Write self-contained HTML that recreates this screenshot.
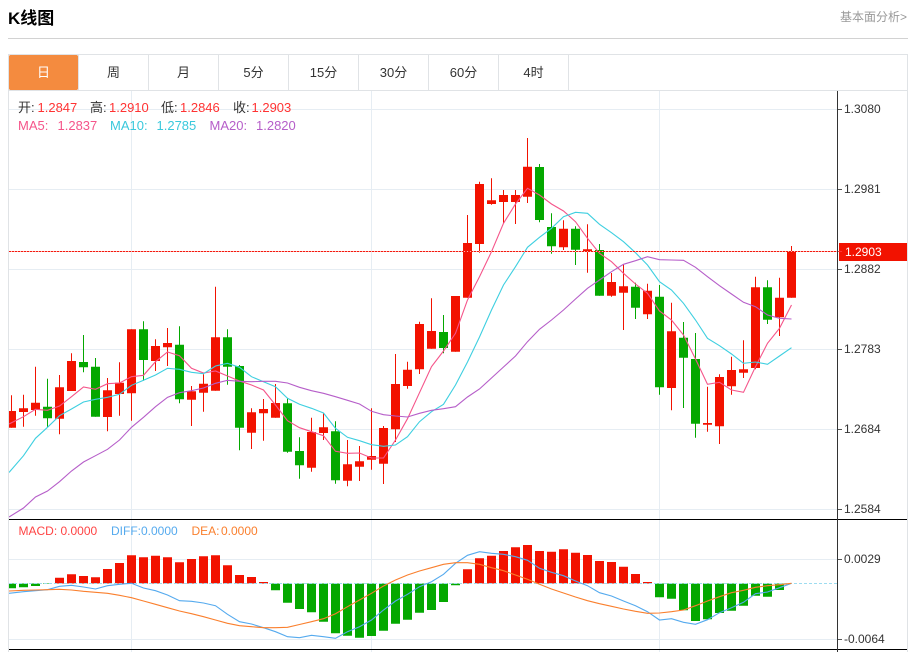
<!DOCTYPE html>
<html lang="zh"><head><meta charset="utf-8"><title>K线图</title>
<style>
html,body{margin:0;padding:0;background:#fff}
body{width:917px;height:652px;position:relative;overflow:hidden;font-family:"Liberation Sans","Noto Sans CJK SC",sans-serif}
svg{position:absolute;left:0;top:0}
.t{position:absolute;white-space:nowrap}
.tab{position:absolute;top:55px;height:35px;width:69px;line-height:35px;text-align:center;font-size:13px;color:#333}
</style></head><body>
<div class="t" style="left:8px;top:8px;font-size:17px;line-height:22px;font-weight:bold;color:#000">K线图</div>
<div class="t" style="right:10px;top:9px;font-size:12px;line-height:16px;color:#999">基本面分析&gt;</div>
<svg width="917" height="652" viewBox="0 0 917 652" fill="none">
<defs><clipPath id="c"><rect x="9" y="91" width="828" height="561"/></clipPath></defs>
<path d="M8 38.5H908" stroke="#d2d2d2"/>
<path d="M8 54.5H908M8 90.5H908M8.5 54V652M907.5 54V652" stroke="#e0e3e6"/>
<path d="M78.5 55V90M148.5 55V90M218.5 55V90M288.5 55V90M358.5 55V90M428.5 55V90M498.5 55V90M568.5 55V90" stroke="#e0e3e6"/>
<rect x="9" y="55" width="69" height="35" rx="2" fill="#f48b3f"/>
<path d="M9 109.5H837M9 189.5H837M9 269.5H837M9 349.5H837M9 429.5H837M9 509.5H837M9 559.5H837M9 639.5H837M131.5 91V652M371.5 91V652M659.5 91V652" stroke="#e6edf3"/>
<g clip-path="url(#c)">
<path stroke="#f21200" d="M11.5 395.3V427.7M23.5 394.7V426.7M35.5 366.7V415.7M59.5 375V434.3M71.5 353.3V391M107.5 378V431.3M119.5 362.3V415.7M131.5 329.3V420.7M155.5 339.3V371M167.5 328V366M191.5 386V426M203.5 374.3V411.7M215.5 286.7V390.7M251.5 408.3V449M263.5 399V440.7M275.5 384V417.7M311.5 417.7V471.7M323.5 413.3V440M347.5 440V486.3M359.5 446V481M371.5 408.3V469.7M383.5 426V484M395.5 354V442M407.5 361.7V388.7M419.5 321.7V374M431.5 298.3V348.7M455.5 296V351.7M467.5 215V297.7M479.5 181.7V252.7M491.5 178.3V204.7M503.5 190V223.3M515.5 190V224M527.5 138V203M563.5 220.3V250M587.5 224.3V272.7M611.5 273V296.7M623.5 264V330M647.5 283.7V319M671.5 302.7V410.3M707.5 386.7V431.7M719.5 374.3V444M731.5 356.7V394.7M743.5 340.3V378M755.5 276.7V369.3M779.5 277.7V336M791.5 246V297.7"/>
<path stroke="#04a800" d="M47.5 378.7V427.3M83.5 335V372.3M95.5 358V416.7M143.5 321.3V380.7M179.5 326.3V403.3M227.5 329.3V384.7M239.5 365V450.3M287.5 398.3V452.7M299.5 437.3V478.7M335.5 421.3V483.7M443.5 315V353.3M539.5 164V222.3M551.5 213.3V253.7M575.5 226.3V265M599.5 244V295.7M635.5 282.7V319M659.5 285V394.7M683.5 322V408M695.5 333V437.7M767.5 280.3V324"/>
<path fill="#f21200" d="M7 411h9V427.7h-9zM19 408.3h9V412h-9zM31 402.7h9V410h-9zM55 387.3h9V418.7h-9zM67 361h9V391h-9zM103 390.3h9V417h-9zM115 382.7h9V394h-9zM127 329.3h9V393.3h-9zM151 346h9V361h-9zM163 343h9V347.3h-9zM187 391.3h9V399.7h-9zM199 383.7h9V392.7h-9zM211 337.3h9V390.7h-9zM247 412.3h9V432.7h-9zM259 409h9V413.3h-9zM271 403h9V417.7h-9zM307 432h9V467.7h-9zM319 427.3h9V433h-9zM343 464.3h9V480.7h-9zM355 461.3h9V466.7h-9zM367 456h9V459.7h-9zM379 428h9V463.7h-9zM391 384h9V429.3h-9zM403 369.7h9V386h-9zM415 324h9V369.3h-9zM427 331h9V348.7h-9zM451 296h9V351.7h-9zM463 243h9V297.7h-9zM475 184h9V244h-9zM487 200.3h9V204h-9zM499 195h9V202h-9zM511 195h9V202h-9zM523 166.7h9V196.7h-9zM559 228.7h9V247.3h-9zM583 249.3h9V251.7h-9zM607 282h9V295.7h-9zM619 286.3h9V292.7h-9zM643 290.7h9V314.3h-9zM667 331.3h9V388h-9zM703 423h9V424.7h-9zM715 377h9V426.3h-9zM727 370h9V386.3h-9zM739 369.3h9V372.7h-9zM751 287.3h9V368h-9zM775 297.7h9V317.3h-9zM787 251.7h9V297.7h-9z"/>
<path fill="#04a800" d="M43 406.7h9V418.3h-9zM79 362h9V367.3h-9zM91 366.7h9V416.7h-9zM139 329.3h9V360h-9zM175 344.7h9V399.3h-9zM223 337.3h9V366.7h-9zM235 366h9V427.7h-9zM283 403.3h9V451.7h-9zM295 451h9V465.3h-9zM331 431.3h9V480.3h-9zM439 332h9V348h-9zM535 167h9V220h-9zM547 227h9V246.3h-9zM571 228.7h9V249.7h-9zM595 250h9V295.7h-9zM631 286.7h9V307.7h-9zM655 296.7h9V387.3h-9zM679 337.7h9V357.7h-9zM691 359h9V423.7h-9zM763 287.3h9V319.7h-9z"/>
<polyline stroke="#f5558a" stroke-width="1.1" points="9,424 23.5,416.7 35.5,409.3 47.5,410.3 59.5,406 71.5,396.7 83.5,387 95.5,389.3 107.5,383.7 119.5,383 131.5,376.7 143.5,375.3 155.5,361.7 167.5,352 179.5,355.7 191.5,368.3 203.5,373 215.5,371 227.5,376 239.5,381 251.5,385 263.5,390 275.5,405 287.5,420.7 299.5,427.7 311.5,431.7 323.5,435.7 335.5,451.3 347.5,453.3 359.5,453 371.5,458 383.5,458 395.5,440 407.5,418.7 419.5,392.7 431.5,366.7 443.5,351 455.5,333.3 467.5,300 479.5,276.7 491.5,251.7 503.5,223.3 515.5,204 527.5,188.3 539.5,195 551.5,204 563.5,211 575.5,221.7 587.5,238.3 599.5,253.3 611.5,261.7 623.5,273.3 635.5,284 647.5,293.3 659.5,311 671.5,320 683.5,335 695.5,359 707.5,384.3 719.5,382.3 731.5,390 743.5,392.3 755.5,366.7 767.5,343.3 779.5,328.3 791.5,305"/>
<polyline stroke="#3ecfe0" stroke-width="1.1" points="9,472.5 23.5,455.7 35.5,438.3 47.5,427.3 59.5,415.7 71.5,409 83.5,402 95.5,399.3 107.5,397.3 119.5,394.3 131.5,385.3 143.5,380.3 155.5,375 167.5,368.3 179.5,369.3 191.5,372.3 203.5,373.7 215.5,366 227.5,363.3 239.5,367.3 251.5,376.7 263.5,381.7 275.5,386.7 287.5,398.3 299.5,404.3 311.5,408.3 323.5,413 335.5,428.3 347.5,437.3 359.5,440.7 371.5,444.7 383.5,446.3 395.5,445 407.5,436.7 419.5,421.7 431.5,411.7 443.5,404.3 455.5,385 467.5,362 479.5,337 491.5,310 503.5,285 515.5,266.7 527.5,247.3 539.5,237.3 551.5,228.3 563.5,216.7 575.5,212.3 587.5,213.3 599.5,224.3 611.5,232.7 623.5,241.7 635.5,252.7 647.5,265 659.5,281.7 671.5,290 683.5,303.3 695.5,320 707.5,338.3 719.5,345.7 731.5,354 743.5,363.3 755.5,362 767.5,364.3 779.5,356 791.5,347.7"/>
<polyline stroke="#b65ec9" stroke-width="1.1" points="9,517 23.5,508 35.5,497 47.5,491 59.5,481.7 71.5,471 83.5,462 95.5,455.7 107.5,449.3 119.5,440 131.5,427.3 143.5,417.3 155.5,406.7 167.5,397.3 179.5,392.7 191.5,390.7 203.5,388 215.5,383.3 227.5,380.3 239.5,381.3 251.5,381.7 263.5,381.3 275.5,381.3 287.5,383 299.5,387.3 311.5,390.7 323.5,393.3 335.5,396.7 347.5,400.3 359.5,404 371.5,411.3 383.5,414.7 395.5,416 407.5,417 419.5,413.3 431.5,410.3 443.5,408.7 455.5,406.7 467.5,397 479.5,389 491.5,378 503.5,367 515.5,356 527.5,341.7 539.5,329.3 551.5,320 563.5,310 575.5,299 587.5,288.3 599.5,280 611.5,271.7 623.5,264.3 635.5,260.7 647.5,256.7 659.5,259.7 671.5,260 683.5,260.3 695.5,267.3 707.5,276.7 719.5,285.7 731.5,294 743.5,302.3 755.5,306.7 767.5,315 779.5,318.3 791.5,319"/>
<path stroke="#ffb0a8" d="M9 251.5H837"/>
<path stroke="#f31a10" stroke-dasharray="2 1" d="M9 251.5H837"/>
<path fill="#f21200" d="M55 577.7h9V583.5h-9zM67 574.3h9V583.5h-9zM79 576h9V583.5h-9zM91 577.3h9V583.5h-9zM103 569h9V583.5h-9zM115 563h9V583.5h-9zM127 555.3h9V583.5h-9zM139 557.3h9V583.5h-9zM151 555.7h9V583.5h-9zM163 557.3h9V583.5h-9zM175 562.3h9V583.5h-9zM187 559h9V583.5h-9zM199 556.3h9V583.5h-9zM211 555.3h9V583.5h-9zM223 565.3h9V583.5h-9zM235 575h9V583.5h-9zM247 577h9V583.5h-9zM259 582h9V583.5h-9zM463 569.3h9V583.5h-9zM475 558.3h9V583.5h-9zM487 555.7h9V583.5h-9zM499 551h9V583.5h-9zM511 547.3h9V583.5h-9zM523 545h9V583.5h-9zM535 551h9V583.5h-9zM547 551.7h9V583.5h-9zM559 549.3h9V583.5h-9zM571 552.7h9V583.5h-9zM583 555h9V583.5h-9zM595 561h9V583.5h-9zM607 562h9V583.5h-9zM619 566.7h9V583.5h-9zM631 574h9V583.5h-9zM643 582h9V583.5h-9z"/>
<path fill="#04a800" d="M7 583.5h9V588.3h-9zM19 583.5h9V587.3h-9zM31 583.5h9V586h-9zM43 583.5h9V584h-9zM271 583.5h9V590.3h-9zM283 583.5h9V602.7h-9zM295 583.5h9V609h-9zM307 583.5h9V612.3h-9zM319 583.5h9V621.7h-9zM331 583.5h9V633.3h-9zM343 583.5h9V635.7h-9zM355 583.5h9V637.7h-9zM367 583.5h9V636h-9zM379 583.5h9V630.7h-9zM391 583.5h9V623.7h-9zM403 583.5h9V619.7h-9zM415 583.5h9V612.7h-9zM427 583.5h9V610h-9zM439 583.5h9V602h-9zM451 583.5h9V585.3h-9zM655 583.5h9V597.3h-9zM667 583.5h9V598.7h-9zM679 583.5h9V610.3h-9zM691 583.5h9V621h-9zM703 583.5h9V619.3h-9zM715 583.5h9V613h-9zM727 583.5h9V610.7h-9zM739 583.5h9V605.7h-9zM751 583.5h9V595.7h-9zM763 583.5h9V596.7h-9zM775 583.5h9V590h-9z"/>
<path stroke="#9ddcf0" stroke-dasharray="3 2" d="M9 583.5H837"/>
<polyline stroke="#55aaee" stroke-width="1.1" points="9,593.3 23.5,591.7 35.5,590.7 47.5,589.7 59.5,586.3 71.5,585.3 83.5,587 95.5,589 107.5,585.7 119.5,584.3 131.5,583.3 143.5,588 155.5,590.7 167.5,595 179.5,600.7 191.5,601.3 203.5,603 215.5,605.7 227.5,614.3 239.5,621.7 251.5,624 263.5,627.7 275.5,631.7 287.5,636.7 299.5,637.7 311.5,635.3 323.5,636.7 335.5,638.3 347.5,631.7 359.5,626.7 371.5,620 383.5,610 395.5,601 407.5,594.3 419.5,586.7 431.5,581.7 443.5,574.3 455.5,563.3 467.5,555.3 479.5,551.7 491.5,553.3 503.5,554.3 515.5,556.7 527.5,560.3 539.5,568.3 551.5,572.3 563.5,575.7 575.5,581 587.5,585.7 599.5,592.7 611.5,596 623.5,601 635.5,605.7 647.5,611.7 659.5,620 671.5,618.7 683.5,622.3 695.5,624.3 707.5,619.7 719.5,612.7 731.5,607.7 743.5,602.3 755.5,593.7 767.5,592 779.5,587.7 791.5,583.3"/>
<polyline stroke="#fa7f2d" stroke-width="1.1" points="9,591 23.5,590.3 35.5,590 47.5,589.7 59.5,589.3 71.5,590 83.5,591.3 95.5,592.3 107.5,593.3 119.5,595.3 131.5,597.7 143.5,601 155.5,604.3 167.5,607.7 179.5,611 191.5,613.7 203.5,616.7 215.5,620 227.5,623.3 239.5,625.7 251.5,626.7 263.5,627.7 275.5,627.7 287.5,627.3 299.5,624.5 311.5,621.7 323.5,618.7 335.5,613.7 347.5,606.7 359.5,600 371.5,593.3 383.5,586 395.5,580 407.5,575 419.5,571 431.5,567.7 443.5,564.3 455.5,562.7 467.5,562.7 479.5,564.3 491.5,567.7 503.5,570.7 515.5,575 527.5,579.3 539.5,584.3 551.5,589 563.5,593 575.5,597 587.5,600.7 599.5,603.7 611.5,606.3 623.5,609 635.5,611.3 647.5,613.3 659.5,613 671.5,611.7 683.5,610 695.5,605.7 707.5,601 719.5,596.7 731.5,592.7 743.5,590.3 755.5,587.3 767.5,585.7 779.5,584.7 791.5,583.3"/>
</g>
<path d="M9 519.5H907M9 649.5H907" stroke="#000"/>
<path d="M837.5 91V652" stroke="#333"/>
<path d="M838 109.5h4M838 189.5h4M838 269.5h4M838 349.5h4M838 429.5h4M838 509.5h4M838 559.5h4M838 639.5h4" stroke="#555"/>
<rect x="839" y="243" width="68" height="18" fill="#f21200"/>
<path d="M838 251.5h4" stroke="#f33"/>
</svg>
<div class="tab" style="left:9px;color:#fff;background:#f48b3f;border-radius:2px">日</div>
<div class="tab" style="left:79px">周</div>
<div class="tab" style="left:149px">月</div>
<div class="tab" style="left:219px">5分</div>
<div class="tab" style="left:289px">15分</div>
<div class="tab" style="left:359px">30分</div>
<div class="tab" style="left:429px">60分</div>
<div class="tab" style="left:499px">4时</div>
<div style="font-size:13px;line-height:18px">
<span class="t" style="left:18px;top:99px;color:#333">开:</span><span class="t" style="left:37.5px;top:99px;color:#f33">1.2847</span>
<span class="t" style="left:90px;top:99px;color:#333">高:</span><span class="t" style="left:109px;top:99px;color:#f33">1.2910</span>
<span class="t" style="left:161px;top:99px;color:#333">低:</span><span class="t" style="left:180px;top:99px;color:#f33">1.2846</span>
<span class="t" style="left:233px;top:99px;color:#333">收:</span><span class="t" style="left:251.5px;top:99px;color:#f33">1.2903</span>
<span class="t" style="left:18px;top:117px;color:#f5558a">MA5:</span><span class="t" style="left:57.5px;top:117px;color:#f5558a">1.2837</span>
<span class="t" style="left:110px;top:117px;color:#3ac8dc">MA10:</span><span class="t" style="left:156.5px;top:117px;color:#3ac8dc">1.2785</span>
<span class="t" style="left:209.5px;top:117px;color:#b65ec9">MA20:</span><span class="t" style="left:256px;top:117px;color:#b65ec9">1.2820</span>
</div>
<div style="font-size:12px;line-height:16px">
<span class="t" style="left:18.5px;top:523px;color:#f44">MACD:</span><span class="t" style="left:60.5px;top:523px;color:#f44">0.0000</span>
<span class="t" style="left:111px;top:523px;color:#55aaee">DIFF:</span><span class="t" style="left:141px;top:523px;color:#55aaee">0.0000</span>
<span class="t" style="left:191.5px;top:523px;color:#fa7f2d">DEA:</span><span class="t" style="left:221px;top:523px;color:#fa7f2d">0.0000</span>
</div>
<div style="font-size:12px;line-height:16px;color:#333">
<span class="t" style="left:844px;top:101px">1.3080</span>
<span class="t" style="left:844px;top:181px">1.2981</span>
<span class="t" style="left:844px;top:261px">1.2882</span>
<span class="t" style="left:844px;top:341px">1.2783</span>
<span class="t" style="left:844px;top:421px">1.2684</span>
<span class="t" style="left:844px;top:501px">1.2584</span>
<span class="t" style="left:844px;top:551px">0.0029</span>
<span class="t" style="left:844px;top:631px">-0.0064</span>
<span class="t" style="left:845px;top:244px;color:#fff">1.2903</span>
</div>
</body></html>
